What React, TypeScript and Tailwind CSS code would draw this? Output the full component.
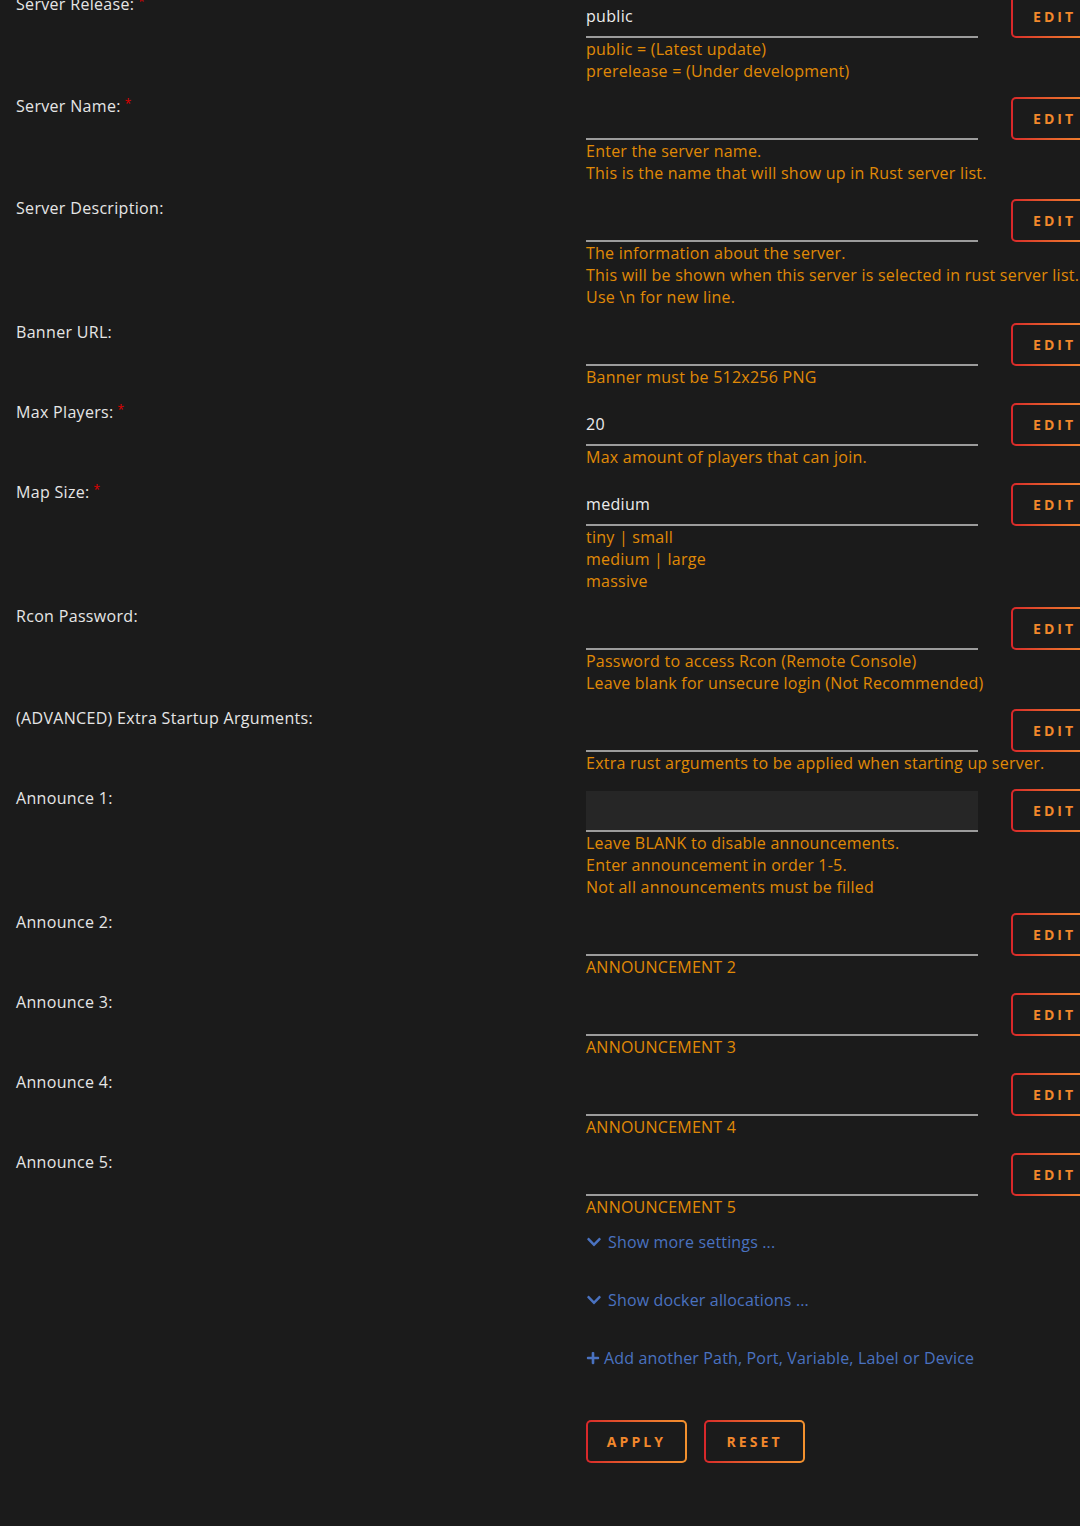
import { FaChevronDown, FaPlus } from "react-icons/fa";

type Field = {
  label: string;
  required?: boolean;
  value?: string;
  filled?: boolean;
  help: string[];
};

const fields: Field[] = [
  { label: "Server Release:", required: true, value: "public", help: ["public = (Latest update)", "prerelease = (Under development)"] },
  { label: "Server Name:", required: true, help: ["Enter the server name.", "This is the name that will show up in Rust server list."] },
  {
    label: "Server Description:",
    help: [
      "The information about the server.",
      "This will be shown when this server is selected in rust server list.",
      "Use \\n for new line.",
    ],
  },
  { label: "Banner URL:", help: ["Banner must be 512x256 PNG"] },
  { label: "Max Players:", required: true, value: "20", help: ["Max amount of players that can join."] },
  { label: "Map Size:", required: true, value: "medium", help: ["tiny | small", "medium | large", "massive"] },
  { label: "Rcon Password:", help: ["Password to access Rcon (Remote Console)", "Leave blank for unsecure login (Not Recommended)"] },
  { label: "(ADVANCED) Extra Startup Arguments:", help: ["Extra rust arguments to be applied when starting up server."] },
  {
    label: "Announce 1:",
    filled: true,
    help: ["Leave BLANK to disable announcements.", "Enter announcement in order 1-5.", "Not all announcements must be filled"],
  },
  { label: "Announce 2:", help: ["ANNOUNCEMENT 2"] },
  { label: "Announce 3:", help: ["ANNOUNCEMENT 3"] },
  { label: "Announce 4:", help: ["ANNOUNCEMENT 4"] },
  { label: "Announce 5:", help: ["ANNOUNCEMENT 5"] },
];

function GradientButton({ text, className, inner }: { text: string; className?: string; inner?: string }) {
  return (
    <div className={"rounded-[5px] bg-linear-to-r from-[#d8262a] to-[#f3922e] p-[2px] " + (className ?? "")}>
      <div
        className={
          "flex h-full w-full items-center rounded-[3px] bg-[#1b1b1b] text-[14px] font-bold tracking-[0.22em] text-[#f2882c] " +
          (inner ?? "justify-center")
        }
      >
        {text}
      </div>
    </div>
  );
}

export default function App() {
  return (
    <div
      className="min-h-[1526px] w-[1080px] overflow-hidden bg-[#1b1b1b] text-[16px]"
      style={{ fontFamily: '"Open Sans", "DejaVu Sans", sans-serif' }}
    >
      <div className="-mt-[5px] flex flex-col">
        {fields.map((f) => (
          <div key={f.label} className="flex pb-[15px]">
            <div className="w-[586px] shrink-0 pl-4 leading-[18px] tracking-[0.02em] text-[#e6e6e6]">
              {f.label}
              {f.required && (
                <span className="relative -top-[4px] ml-[4px] text-[12px] text-[#e00000]">*</span>
              )}
            </div>
            <div className="w-[392px] shrink-0">
              {f.filled ? (
                <div className="pt-[2px]">
                  <div className="h-[41px] border-b-2 border-[#9c9c9c] bg-[#262626]" />
                </div>
              ) : (
                <div className="flex h-[43px] items-center border-b-2 border-[#9c9c9c] tracking-[0.02em] text-[#ececec]">
                  {f.value}
                </div>
              )}
              <div className="whitespace-nowrap leading-[22px] tracking-[0.015em] text-[#e08a06]">
                {f.help.map((h) => (
                  <div key={h}>{h}</div>
                ))}
              </div>
            </div>
            <GradientButton text="EDIT" className="ml-[33px] h-[43px] w-[90px] shrink-0" inner="justify-start pl-[20px]" />
          </div>
        ))}
      </div>

      <div className="ml-[586px] flex flex-col tracking-[0.01em] text-[#4a72c0]">
        <div className="-mt-[2px] flex items-center gap-[6px] leading-[22px]">
          <FaChevronDown className="text-[16px]" />
          <span>Show more settings ...</span>
        </div>
        <div className="mt-[36px] flex items-center gap-[6px] leading-[22px]">
          <FaChevronDown className="text-[16px]" />
          <span>Show docker allocations ...</span>
        </div>
        <div className="mt-[36px] flex items-center gap-[4px] leading-[22px]">
          <FaPlus className="text-[14px]" />
          <span>Add another Path, Port, Variable, Label or Device</span>
        </div>
        <div className="mt-[51px] flex gap-[17px]">
          <GradientButton text="APPLY" className="h-[43px] w-[101px]" />
          <GradientButton text="RESET" className="h-[43px] w-[101px]" />
        </div>
      </div>
    </div>
  );
}
